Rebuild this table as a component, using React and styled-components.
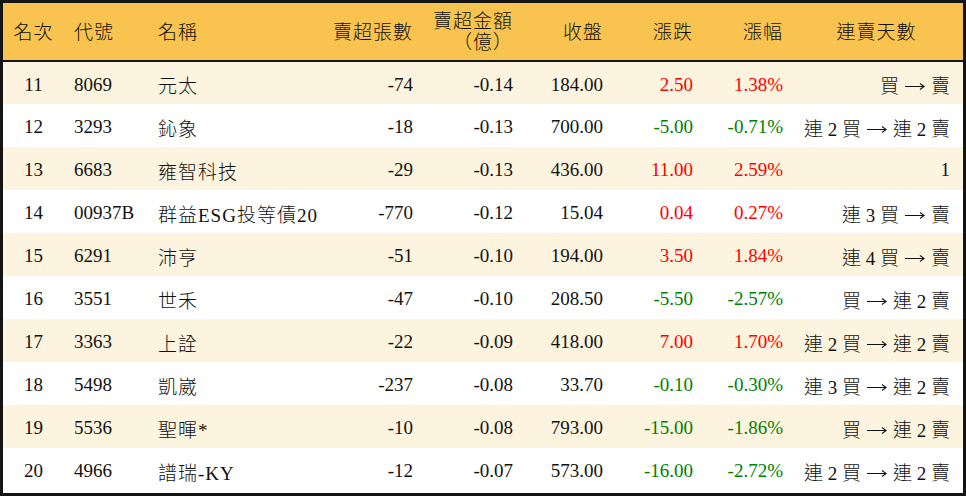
import React from "react";
import styled, { createGlobalStyle } from "styled-components";

const GlobalStyle = createGlobalStyle`
  html, body {
    margin: 0;
    padding: 0;
    background: #ffffff;
  }
`;

const rows = [
  { rank: 11, code: "8069", name: "元太", vol: "-74", amt: "-0.14", close: "184.00", chg: "2.50", pct: "1.38%", days: ["買", "賣"] },
  { rank: 12, code: "3293", name: "鈊象", vol: "-18", amt: "-0.13", close: "700.00", chg: "-5.00", pct: "-0.71%", days: ["連 2 買", "連 2 賣"] },
  { rank: 13, code: "6683", name: "雍智科技", vol: "-29", amt: "-0.13", close: "436.00", chg: "11.00", pct: "2.59%", days: ["1"] },
  { rank: 14, code: "00937B", name: "群益ESG投等債20", vol: "-770", amt: "-0.12", close: "15.04", chg: "0.04", pct: "0.27%", days: ["連 3 買", "賣"] },
  { rank: 15, code: "6291", name: "沛亨", vol: "-51", amt: "-0.10", close: "194.00", chg: "3.50", pct: "1.84%", days: ["連 4 買", "賣"] },
  { rank: 16, code: "3551", name: "世禾", vol: "-47", amt: "-0.10", close: "208.50", chg: "-5.50", pct: "-2.57%", days: ["買", "連 2 賣"] },
  { rank: 17, code: "3363", name: "上詮", vol: "-22", amt: "-0.09", close: "418.00", chg: "7.00", pct: "1.70%", days: ["連 2 買", "連 2 賣"] },
  { rank: 18, code: "5498", name: "凱崴", vol: "-237", amt: "-0.08", close: "33.70", chg: "-0.10", pct: "-0.30%", days: ["連 3 買", "連 2 賣"] },
  { rank: 19, code: "5536", name: "聖暉*", vol: "-10", amt: "-0.08", close: "793.00", chg: "-15.00", pct: "-1.86%", days: ["買", "連 2 賣"] },
  { rank: 20, code: "4966", name: "譜瑞-KY", vol: "-12", amt: "-0.07", close: "573.00", chg: "-16.00", pct: "-2.72%", days: ["連 2 買", "連 2 賣"] },
];

const widths = [61, 84, 175, 100, 100, 90, 90, 90, 170];

const Frame = styled.div`
  width: 966px;
  height: 496px;
  box-sizing: border-box;
  border: 3px solid #141414;
  overflow: hidden;
`;

const Table = styled.table`
  width: 100%;
  border-collapse: collapse;
  table-layout: fixed;
  font-family: "Liberation Serif", "Noto Sans CJK TC", serif;
  font-size: 19px;
  font-weight: 300;
  color: #111111;
`;

const HeadRow = styled.tr`
  background: #f9c34f;
  height: 58px;
`;

const HeadCell = styled.th`
  font-weight: 300;
  text-align: ${(p) => p.$align || "left"};
  padding: 1px 10px 0;
  line-height: 21px;
  letter-spacing: 1px;
  border-bottom: 2px solid #141414;
  vertical-align: middle;
  &:last-child {
    padding-right: 13px;
  }
`;

const Row = styled.tr`
  height: 43px;
  background: ${(p) => (p.$striped ? "#fdf4df" : "#ffffff")};
`;

const toneColor = { up: "#ff0000", down: "#008000" };

const Cell = styled.td`
  text-align: ${(p) => p.$align || "left"};
  color: ${(p) => toneColor[p.$tone] || "#111111"};
  padding: 3px 10px 0;
  white-space: nowrap;
  vertical-align: middle;
  &:last-child {
    padding-right: 13px;
  }
`;

const CjkText = styled.span`
  letter-spacing: 1px;
`;

const ArrowIcon = styled.svg`
  display: inline-block;
  width: 20px;
  height: 10px;
  margin: 0 6px;
  vertical-align: 2px;
`;

const Arrow = () => (
  <ArrowIcon viewBox="0 0 20 10">
    <path d="M0 5.5 H19 M15 2.5 L19.2 5.5 L15 8.5" fill="none" stroke="#111" strokeWidth="1.1" />
  </ArrowIcon>
);

const headers = [
  { label: "名次", align: "center" },
  { label: "代號", align: "left" },
  { label: "名稱", align: "left" },
  { label: "賣超張數", align: "right" },
  { label: ["賣超金額", "（億）"], align: "right" },
  { label: "收盤", align: "right" },
  { label: "漲跌", align: "right" },
  { label: "漲幅", align: "right" },
  { label: "連賣天數", align: "center" },
];

const tone = (v) => (v.startsWith("-") ? "down" : "up");

export default function App() {
  return (
    <>
      <GlobalStyle />
      <Frame>
        <Table>
          <colgroup>
            {widths.map((w, i) => (
              <col key={i} style={{ width: w }} />
            ))}
          </colgroup>
          <thead>
            <HeadRow>
              {headers.map((h, i) => (
                <HeadCell key={i} $align={h.align}>
                  {Array.isArray(h.label) ? (
                    <>
                      {h.label[0]}
                      <br />
                      {h.label[1]}
                    </>
                  ) : (
                    h.label
                  )}
                </HeadCell>
              ))}
            </HeadRow>
          </thead>
          <tbody>
            {rows.map((r, i) => (
              <Row key={r.rank} $striped={i % 2 === 0}>
                <Cell $align="center">{r.rank}</Cell>
                <Cell>{r.code}</Cell>
                <Cell>
                  <CjkText>{r.name}</CjkText>
                </Cell>
                <Cell $align="right">{r.vol}</Cell>
                <Cell $align="right">{r.amt}</Cell>
                <Cell $align="right">{r.close}</Cell>
                <Cell $align="right" $tone={tone(r.chg)}>
                  {r.chg}
                </Cell>
                <Cell $align="right" $tone={tone(r.pct)}>
                  {r.pct}
                </Cell>
                <Cell $align="right">
                  {r.days.length === 2 ? (
                    <>
                      {r.days[0]}
                      <Arrow />
                      {r.days[1]}
                    </>
                  ) : (
                    r.days[0]
                  )}
                </Cell>
              </Row>
            ))}
          </tbody>
        </Table>
      </Frame>
    </>
  );
}
